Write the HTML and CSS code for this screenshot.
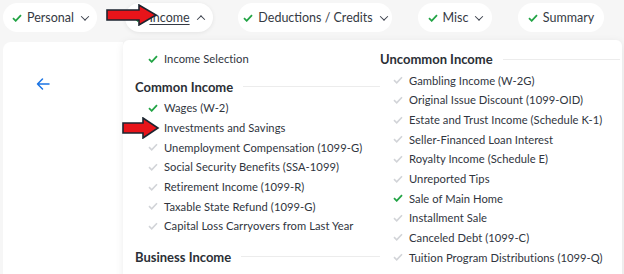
FILE: index.html
```html
<!DOCTYPE html>
<html>
<head>
<meta charset="utf-8">
<link rel="stylesheet" href="styles.css">
</head>
<body>
<nav class="nav">
  <div class="pill p-personal"><span class="ck"></span><span>Personal</span><span class="chev down"></span></div>
  <div class="pill p-income"><span class="ck"></span><span class="u">Income</span><span class="chev up"></span></div>
  <div class="pill p-ded"><span class="ck"></span><span>Deductions / Credits</span><span class="chev down"></span></div>
  <div class="pill p-misc"><span class="ck"></span><span>Misc</span><span class="chev down"></span></div>
  <div class="pill p-sum"><span class="ck"></span><span>Summary</span></div>
</nav>
<svg class="redarrow a1" width="52" height="22" viewBox="0 0 52 22"><polygon points="1,6 33,6 33,1 50,11 33,21 33,16 1,16" fill="#e8141a" stroke="#1c2530" stroke-width="1.6" stroke-linejoin="miter"/></svg>
<div class="main">
  <aside class="side">
    <svg class="back" width="14" height="14" viewBox="0 0 14 14"><path d="M13 7H1.5M6.5 2L1.5 7l5 5" fill="none" stroke="#1b74e4" stroke-width="1.5" stroke-linecap="round" stroke-linejoin="round"/></svg>
  </aside>
  <section class="menu">
    <div class="col">
      <div class="item on"><span class="ic"></span>Income Selection</div>
      <div class="hd"><span>Common Income</span><i></i></div>
      <div class="item on"><span class="ic"></span>Wages (W-2)</div>
      <div class="item"><span class="ic"></span>Investments and Savings</div>
      <div class="item off"><span class="ic"></span>Unemployment Compensation (1099-G)</div>
      <div class="item off"><span class="ic"></span>Social Security Benefits (SSA-1099)</div>
      <div class="item off"><span class="ic"></span>Retirement Income (1099-R)</div>
      <div class="item off"><span class="ic"></span>Taxable State Refund (1099-G)</div>
      <div class="item off"><span class="ic"></span>Capital Loss Carryovers from Last Year</div>
      <div class="hd hd2"><span>Business Income</span><i></i></div>
    </div>
    <div class="col col2">
      <div class="hd hd0"><span>Uncommon Income</span><i></i></div>
      <div class="item off"><span class="ic"></span>Gambling Income (W-2G)</div>
      <div class="item off"><span class="ic"></span>Original Issue Discount (1099-OID)</div>
      <div class="item off"><span class="ic"></span>Estate and Trust Income (Schedule K-1)</div>
      <div class="item off"><span class="ic"></span>Seller-Financed Loan Interest</div>
      <div class="item off"><span class="ic"></span>Royalty Income (Schedule E)</div>
      <div class="item off"><span class="ic"></span>Unreported Tips</div>
      <div class="item on"><span class="ic"></span>Sale of Main Home</div>
      <div class="item off"><span class="ic"></span>Installment Sale</div>
      <div class="item off"><span class="ic"></span>Canceled Debt (1099-C)</div>
      <div class="item off"><span class="ic"></span>Tuition Program Distributions (1099-Q)</div>
    </div>
  </section>
</div>
<svg class="redarrow a2" width="38" height="22" viewBox="0 0 38 22"><polygon points="1,6 21,6 21,1 36,11 21,21 21,16 1,16" fill="#e8141a" stroke="#1c2530" stroke-width="1.6"/></svg>
</body>
</html>
```
FILE: styles.css
```css
* { box-sizing: border-box; }
html, body { margin: 0; height: 274px; overflow: hidden; }
body {
  background: #f6f6f6;
  font-family: Lato, "Noto Sans", sans-serif;
  color: #30353e;
  position: relative;
}
.nav {
  display: flex;
  padding: 3px 0 0 3px;
  gap: 26px;
  height: 40px;
}
.pill {
  height: 29px;
  background: #fff;
  border-radius: 15px;
  display: flex;
  align-items: center;
  justify-content: center;
  gap: 5px;
  font-size: 12.5px;
  color: #353a44;
}
.p-personal { width: 94px; }
.p-income { width: 88px; margin-left: 2px; box-shadow: 0 1px 4px rgba(0,0,0,0.08); }
.p-ded { width: 154px; margin-left: -1px; }
.p-misc { width: 74px; }
.p-sum { width: 86px; }
.u { text-decoration: underline; text-underline-offset: 2px; }
.ck, .ic {
  width: 10px; height: 8px;
  display: inline-block;
  background: no-repeat center/contain;
}
.ck, .on .ic {
  background-image: url("data:image/svg+xml,%3Csvg xmlns='http://www.w3.org/2000/svg' viewBox='0 0 10 8'%3E%3Cpath d='M1 4.2l2.7 2.6L9 1.2' fill='none' stroke='%2322a445' stroke-width='1.8'/%3E%3C/svg%3E");
}
.off .ic {
  background-image: url("data:image/svg+xml,%3Csvg xmlns='http://www.w3.org/2000/svg' viewBox='0 0 10 8'%3E%3Cpath d='M1 4.2l2.7 2.6L9 1.2' fill='none' stroke='%23d2d4d8' stroke-width='1.6'/%3E%3C/svg%3E");
}
.chev {
  width: 6px; height: 6px;
  border-right: 1.6px solid #3a3f4a;
  border-bottom: 1.6px solid #3a3f4a;
  margin-left: 3px;
}
.chev.down { transform: rotate(45deg) translate(-1px,-1px); }
.chev.up { transform: rotate(-135deg) translate(-1px,-1px); }
.main {
  display: flex;
  align-items: flex-start;
}
.side {
  margin: 2px 0 0 3px;
  width: 120px;
  height: 240px;
  background: #fff;
  border-radius: 8px 0 0 0;
  padding: 35px 0 0 33px;
}
.back { display: block; }
.menu {
  width: 499px;
  height: 240px;
  background: #fff;
  box-shadow: 0 2px 8px rgba(0,0,0,0.08);
  border-radius: 6px 6px 0 0;
  display: flex;
  padding: 9px 0 0 12px;
}
.col { width: 245px; }
.col2 { width: 240px; }
.item {
  display: flex;
  align-items: center;
  height: 19.65px;
  font-size: 11.2px;
  padding-left: 13px;
  gap: 6px;
  letter-spacing: 0.05px;
}
.hd {
  display: flex;
  align-items: center;
  font-size: 13px;
  font-weight: 700;
  color: #2b2f36;
  height: 20px;
  margin: 8px 0 1.5px;
  gap: 10px;
}
.hd i { flex: 1; height: 1px; background: #ececec; }
.hd0 { margin-top: 0; }
.hd2 { margin-top: 11px; }
.redarrow { position: absolute; }
.a1 { left: 106px; top: 4px; }
.a2 { left: 122px; top: 117px; }
```
